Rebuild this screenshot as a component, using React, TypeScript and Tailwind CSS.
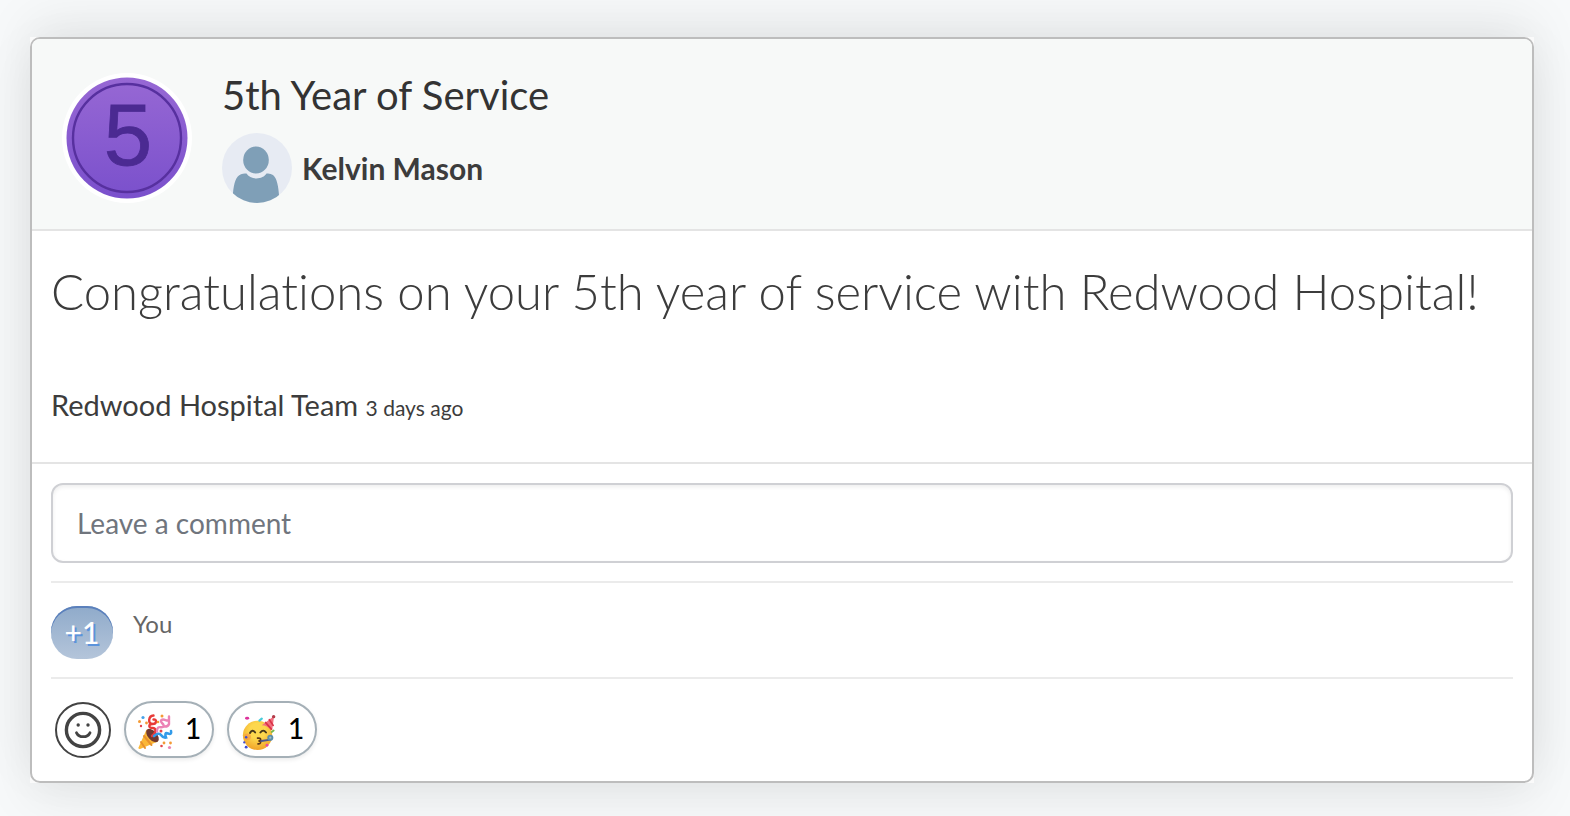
const reactions = [
  { name: "Party popper", count: 1, Icon: PopperIcon },
  { name: "Partying face", count: 1, Icon: PartyFaceIcon },
];

function ServiceBadge() {
  return (
    <svg viewBox="0 0 130 130" className="size-[130px] shrink-0" role="img">
      <defs>
        <linearGradient id="badge" x1="0" y1="0" x2="0" y2="1">
          <stop offset="0" stopColor="#9768d4" />
          <stop offset="1" stopColor="#7a50cc" />
        </linearGradient>
      </defs>
      <circle cx="65" cy="65" r="65" fill="#fff" />
      <circle cx="65" cy="65" r="60.5" fill="url(#badge)" />
      <circle cx="65" cy="65" r="54" fill="none" stroke="#57309f" strokeWidth="2.4" />
      <text
        x="66"
        y="92"
        textAnchor="middle"
        fontSize="87"
        fill="#4b2a92"
        stroke="#4b2a92"
        strokeWidth="0.8"
        className="font-['Liberation_Sans',sans-serif]"
      >
        5
      </text>
    </svg>
  );
}

function Avatar() {
  return (
    <svg viewBox="0 0 70 70" className="size-[70px] shrink-0" aria-hidden="true">
      <clipPath id="avatar">
        <circle cx="35" cy="35" r="35" />
      </clipPath>
      <g clipPath="url(#avatar)">
        <rect width="70" height="70" fill="#e7ebf3" />
        <ellipse cx="34" cy="27" rx="12.8" ry="13.6" fill="#7f9fb7" />
        <path
          d="M11 70V60C12 50 14 43 19 41.300Q22 40 24.500 40.600C28 47 41 47 44.500 40.600Q48 40 51 42C55 45 56.500 54 57 62V70Z"
          fill="#7f9fb7"
        />
      </g>
    </svg>
  );
}

function SmileIcon() {
  return (
    <svg viewBox="0 0 38 38" className="size-[38px]" fill="none" stroke="#434343" strokeLinecap="round" aria-hidden="true">
      <circle cx="19" cy="19" r="16.600" strokeWidth="3.400" />
      <path d="M12.500 21.800C15 27 23.500 27 26 21.800" strokeWidth="2.800" />
      <circle cx="14.200" cy="14" r="1.700" fill="#434343" stroke="none" />
      <circle cx="24" cy="14" r="1.700" fill="#434343" stroke="none" />
    </svg>
  );
}

function PopperIcon() {
  return (
    <svg viewBox="0 0 36 36" className="mt-2 size-9" fill="none" strokeLinecap="round" aria-hidden="true">
      <path d="M1.500 33.500 9.500 15.500Q17 18 21 27.500L3 35Q1 35 1.500 33.500Z" fill="#fbb736" />
      <path d="M4 28 8 34M7 22 14.500 31" stroke="#e8912b" strokeWidth="2" />
      <ellipse cx="15.500" cy="21.500" rx="4.500" ry="8" transform="rotate(-42 15.500 21.500)" fill="#70382f" />
      <path d="M15 22C20 18 19 14 15.500 14C11 14 11.500 10 15.500 10C20 10 20 5 16.500 5.500M16.500 1.500C11 2 11 10 15 10" stroke="#e83a37" strokeWidth="2.400" />
      <path d="M20 17.500C20 11 23.500 14 26 13C29 11 22 8 24.500 6C27 4 30 8 32 6V2.500M32 6V10Q31 13 27 12.500" stroke="#ec83b5" strokeWidth="2.400" />
      <path d="M17 22Q22 18 24 21T29 23.500Q27 18 31 19.500T34 17" stroke="#329be9" strokeWidth="2.600" />
      <g fill="#f49a35">
        <circle cx="2.500" cy="7.500" r="1.500" />
        <circle cx="9.500" cy="9" r="1.400" />
        <circle cx="25" cy="2" r="1.500" />
        <circle cx="21" cy="8" r="1.300" />
        <circle cx="27" cy="29" r="1.400" />
        <circle cx="33.500" cy="29" r="1.400" />
      </g>
      <g fill="#e2454b">
        <circle cx="4" cy="12" r="1.200" />
        <circle cx="24" cy="17" r="1.500" />
        <circle cx="24.500" cy="32" r="1.300" />
      </g>
      <circle cx="6" cy="3.500" r="1.600" fill="#48a2e8" />
      <circle cx="32.500" cy="33.500" r="1.600" fill="#e984b4" />
    </svg>
  );
}

function PartyFaceIcon() {
  return (
    <svg viewBox="-1 -1 37 38" className="mt-2 size-9" fill="none" strokeLinecap="round" aria-hidden="true">
      <defs>
        <radialGradient id="face" cx=".5" cy=".35" r=".65">
          <stop offset=".4" stopColor="#fdd84d" />
          <stop offset="1" stopColor="#f0a329" />
        </radialGradient>
      </defs>
      <circle cx="17" cy="21.500" r="15.500" fill="url(#face)" />
      <circle cx="6.500" cy="23" r="3.500" fill="#f48b45" opacity=".55" />
      <path d="M34.500 1 21.500 11Q27 11 32.500 16.500Z" fill="#f27180" />
      <path d="m25.500 8 6 7M29.500 5l4 6" stroke="#d93448" strokeWidth="1.800" />
      <circle cx="34" cy="1.800" r="1.800" fill="#b33b49" />
      <path d="M9 19Q11.500 14.500 14.500 18.500M20 18.500Q23 14.500 26 18.500" stroke="#493a1b" strokeWidth="2" />
      <path d="M17 24.500C21.500 24 21 27 18 27.500C22 28 20 31 17.500 30.500" stroke="#5b3718" strokeWidth="1.700" />
      <path d="m21 27.500 10-1.500" stroke="#4b578b" strokeWidth="2" />
      <circle cx="30.500" cy="24" r="3.200" fill="#5b8eaa" />
      <circle cx="30.500" cy="24" r="1.200" fill="#a2bdc4" />
      <ellipse cx="6" cy="3.500" rx="2.200" ry="1.500" fill="#dc329b" />
      <path d="m19 6 2.500-2" stroke="#48ccda" strokeWidth="2.400" />
      <path d="m32 18 2-1.500" stroke="#76b84b" strokeWidth="2" />
      <g fill="#3e4bd0">
        <circle cx="5" cy="23.500" r="1.300" />
        <circle cx="3" cy="29" r="1.200" />
        <circle cx="5" cy="34" r="1.500" />
      </g>
      <circle cx="27" cy="32" r="1.500" fill="#e64b9e" />
    </svg>
  );
}

function App() {
  return (
    <main className="min-h-screen bg-[#f7f9fa] pt-[37px] pr-9 pb-[33px] pl-[30px] font-[Lato,sans-serif] text-[#3c3c3c]">
      <div className="bg-[#fafafa] shadow-[0_-16px_50px_rgba(0,0,0,0.07),0_16px_50px_rgba(0,0,0,0.07)]">
        <article className="overflow-hidden rounded-[10px] border-2 border-[#bdbdbd] bg-white">
          <header className="flex gap-[30px] border-b-2 border-[#e4e4e4] bg-[#f7f9f8] px-[30px] pt-[34px] pb-[26px]">
            <ServiceBadge />
            <div>
              <h1 className="text-[40px] leading-[44px] text-[#333]">5th Year of Service</h1>
              <div className="mt-4 flex items-center gap-[10px]">
                <Avatar />
                <p className="text-[30px] font-bold">Kelvin Mason</p>
              </div>
            </div>
          </header>

          <section className="border-b-2 border-[#e4e4e4] px-[19px] pt-[30px] pb-[34px]">
            <p className="text-[49px] leading-[60px] font-light [font-variant-ligatures:no-common-ligatures]">
              Congratulations on your 5th year of service with Redwood Hospital!
            </p>
            <p className="mt-16 text-[29px] leading-10">
              Redwood Hospital Team <small className="text-[21px]">3 days ago</small>
            </p>
          </section>

          <section className="px-[19px] pt-[19px]">
            <input
              type="text"
              aria-label="Leave a comment"
              placeholder="Leave a comment"
              className="block h-20 w-full rounded-xl border-2 border-[#cfd0d4] px-6 text-[28px] shadow-[inset_0_2px_4px_rgba(0,0,0,0.07)] outline-none placeholder:text-[#70757d]"
            />
            <div className="mt-[18px] flex items-start gap-5 border-y-2 border-[#ebebeb] pt-[23px] pb-[18px]">
              <span className="flex h-[53px] w-[62px] items-center justify-center rounded-[26px] bg-linear-to-b from-[#8faaca] to-[#b4c5da] text-[30px] font-medium text-white shadow-[inset_0_2px_0_#5b80bc] text-shadow-[2px_2px_0_#5b93db]">
                +1
              </span>
              <p className="text-[24px] leading-9 text-[#666]">You</p>
            </div>
            <div className="flex items-center gap-[13px] px-1 pt-[22px] pb-[23px]">
              <button
                type="button"
                aria-label="Add a reaction"
                className="flex size-14 items-center justify-center rounded-full border-2 border-[#434343]"
              >
                <SmileIcon />
              </button>
              {reactions.map(({ name, count, Icon }) => (
                <button
                  key={name}
                  type="button"
                  aria-label={`${name} ${count}`}
                  className="flex h-[57px] w-[90px] items-center justify-center gap-3 rounded-full border-2 border-[#a5b0b7] pb-1 text-[28px] font-medium text-black shadow-[0_2px_4px_rgba(0,0,0,0.08)]"
                >
                  <Icon />
                  {count}
                </button>
              ))}
            </div>
          </section>
        </article>
      </div>
    </main>
  );
}

export default App;
